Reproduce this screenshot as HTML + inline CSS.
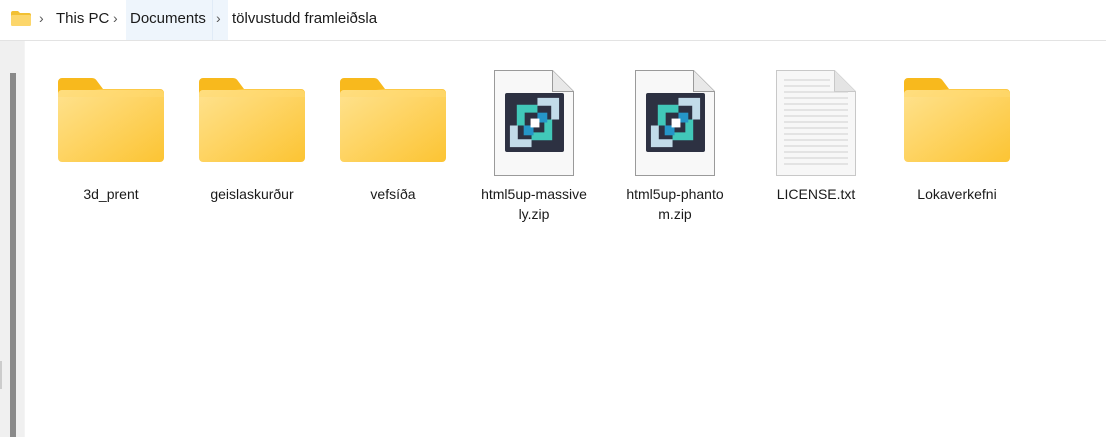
<!DOCTYPE html>
<html><head><meta charset="utf-8"><style>
body{margin:0;width:1106px;height:437px;background:#fff;position:relative;overflow:hidden;font-family:"Segoe UI","Liberation Sans",sans-serif;color:#1a1a1a}
.bar{position:absolute;left:0;top:0;width:1106px;height:40px;border-bottom:1px solid #e3e3e3;background:#fff}
.bar span{position:absolute;top:10px;font-size:15px}
.chev{color:#555;font-size:14px!important;top:10px!important}
.hl{position:absolute;left:126px;top:0;width:102px;height:40px;background:#eef5fc}
.hl2{position:absolute;left:212px;top:0;width:1px;height:40px;background:#e0ebf7}
.side{position:absolute;left:0;top:41px;width:24px;height:396px;background:#f0f0f0;border-right:1px solid #f4f4f4}
.thumb{position:absolute;left:10px;top:73px;width:6px;height:364px;background:#8a8a8a}
.nub{position:absolute;left:0;top:320px;width:2px;height:28px;background:#ccc}
.item{position:absolute;top:66px;width:130px;text-align:center}
.lbl{position:absolute;top:118px;left:0;width:130px;font-size:14px;line-height:20px;text-align:center;color:#1a1a1a}
svg{position:absolute}
</style></head><body>
<div class="bar">
<div class="hl"></div><div class="hl2"></div>
<svg style="left:11px;top:11px" width="20" height="15" viewBox="0 0 20 15"><path d="M0 2a2 2 0 0 1 2-2h5l2 2h9a2 2 0 0 1 2 2v9a2 2 0 0 1-2 2H2a2 2 0 0 1-2-2z" fill="#f2c033"/><rect x="0" y="4" width="20" height="11" rx="1.5" fill="#fcd66b"/></svg>
<span class="chev" style="left:39px">&#x203A;</span>
<span style="left:56px">This PC</span>
<span class="chev" style="left:113px">&#x203A;</span>
<span style="left:130px">Documents</span>
<span class="chev" style="left:216px">&#x203A;</span>
<span style="left:232px">tölvustudd framleiðsla</span>
</div>
<div class="side"><div class="nub"></div></div>
<div class="thumb"></div>

<svg width="0" height="0"><defs>
<linearGradient id="fg" x1="0" y1="0" x2="1" y2="1"><stop offset="0" stop-color="#ffe28e"/><stop offset="1" stop-color="#fcc433"/></linearGradient>
<symbol id="folder" viewBox="0 0 106 84"><path d="M0 4a4 4 0 0 1 4-4h30a6 6 0 0 1 5 3l6 8h57a4 4 0 0 1 4 4v20H0z" fill="#f8b91d"/><rect x="2" y="15" width="44" height="10" rx="2" fill="#f4f4f4"/><rect x="0" y="12" width="106" height="72" rx="4" fill="url(#fg)"/><path d="M0 16a4 4 0 0 1 4-4h32l8 -1h58a4 4 0 0 1 4 4v4H0z" fill="#ffd970" opacity=".5"/></symbol>
<symbol id="logo" viewBox="0 0 60 60"><rect width="60" height="60" rx="2" fill="#2d3142"/><path d="M33 5h22v22h-8V13H33z" fill="#c2dbe9"/><path d="M12 12h21v8H20v13h-8z" fill="#41c8b9"/><path d="M5 33h8v14h14v8H5z" fill="#c2dbe9"/><path d="M40 27h8v21H27v-8h13z" fill="#41c8b9"/><rect x="33" y="20" width="10" height="10" fill="#2596c8"/><rect x="19" y="33" width="10" height="10" fill="#2596c8"/><rect x="26" y="26" width="9" height="9" fill="#fff"/></symbol>
<symbol id="page" viewBox="0 0 80 106"><path d="M.5 .5h58l21 21v84H.5z" fill="#f8f8f8" stroke="#9a9a9a"/><path d="M58.5 .5v21h21" fill="#e8e8e8" stroke="#9a9a9a"/></symbol>
</defs></svg>

<div class="item" style="left:46px"><svg style="left:12px;top:12px" width="106" height="84"><use href="#folder"/></svg><div class="lbl">3d_prent</div></div>
<div class="item" style="left:187px"><svg style="left:12px;top:12px" width="106" height="84"><use href="#folder"/></svg><div class="lbl">geislaskurður</div></div>
<div class="item" style="left:328px"><svg style="left:12px;top:12px" width="106" height="84"><use href="#folder"/></svg><div class="lbl">vefsíða</div></div>
<div class="item" style="left:469px"><svg style="left:25px;top:4px" width="80" height="106"><use href="#page"/></svg><svg style="left:36px;top:27px" width="59" height="59"><use href="#logo"/></svg><div class="lbl">html5up-massive<br>ly.zip</div></div>
<div class="item" style="left:610px"><svg style="left:25px;top:4px" width="80" height="106"><use href="#page"/></svg><svg style="left:36px;top:27px" width="59" height="59"><use href="#logo"/></svg><div class="lbl">html5up-phanto<br>m.zip</div></div>
<div class="item" style="left:751px"><svg style="left:25px;top:4px" width="80" height="106" viewBox="0 0 80 106"><path d="M.5 .5h58l21 21v84H.5z" fill="#f7f7f7" stroke="#c8c8c8"/><path d="M58.5 .5v21h21" fill="#e4e4e4" stroke="#c8c8c8"/><g stroke="#cfcfcf"><path d="M8 10h46M8 16h46M8 22h64M8 28h64M8 34h64M8 40h64M8 46h64M8 52h64M8 58h64M8 64h64M8 70h64M8 76h64M8 82h64M8 88h64M8 94h64"/></g></svg><div class="lbl">LICENSE.txt</div></div>
<div class="item" style="left:892px"><svg style="left:12px;top:12px" width="106" height="84"><use href="#folder"/></svg><div class="lbl">Lokaverkefni</div></div>
</body></html>
